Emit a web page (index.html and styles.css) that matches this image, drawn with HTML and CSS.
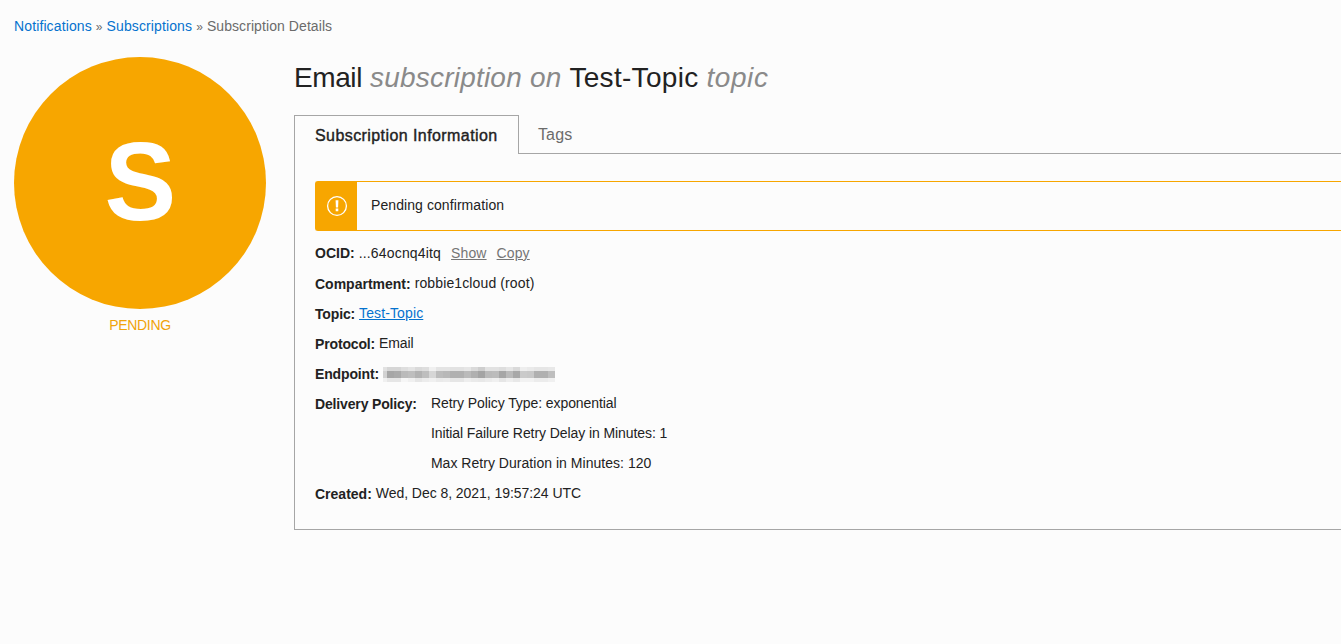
FILE: index.html
```html
<!DOCTYPE html>
<html lang="en">
<head>
<meta charset="utf-8">
<title>Subscription Details</title>
<link rel="stylesheet" href="styles.css">
</head>
<body>
<nav class="breadcrumb"><a href="#">Notifications</a> <span class="sep">»</span> <a href="#">Subscriptions</a> <span class="sep">»</span> <span class="current">Subscription Details</span></nav>
<div class="layout">
  <aside class="status">
    <div class="status-circle"><span class="status-letter">S</span></div>
    <div class="status-label">PENDING</div>
  </aside>
  <main class="content">
    <h1 class="title"><span class="t-type">Email</span> <em class="t-sub">subscription on</em> <span class="t-topic">Test-Topic</span> <em class="t-end">topic</em></h1>
    <div class="tabs">
      <div class="tab active"><span class="active-text">Subscription Information</span></div>
      <div class="tab rest">Tags</div>
    </div>
    <section class="panel">
      <div class="alert">
        <div class="alert-icon">
          <svg width="22" height="22" viewBox="0 0 22 22"><circle cx="11" cy="11" r="9.4" fill="none" stroke="#fff" stroke-width="1.3"/><path d="M9.6 5.2h2.8l-.3 7.2H9.9zM9.7 13.6h2.6v2.6H9.7z" fill="#fff"/></svg>
        </div>
        <div class="alert-text">Pending confirmation</div>
      </div>
      <div class="details">
        <div class="row ocid"><b>OCID:</b><span class="value">...64ocnq4itq</span><a class="action" href="#">Show</a><a class="action" href="#">Copy</a></div>
        <div class="row"><b>Compartment:</b><span class="value">robbie1cloud (root)</span></div>
        <div class="row tight"><b>Topic:</b><a class="value link" href="#">Test-Topic</a></div>
        <div class="row tight"><b>Protocol:</b><span class="value email">Email</span></div>
        <div class="row tight"><b>Endpoint:</b><svg class="redacted" width="176" height="15" viewBox="0 0 176 15" shape-rendering="crispEdges"><g id="mosaic"></g></svg></div>
        <div class="row policy tight"><b>Delivery Policy:</b>
          <div class="policy-list"><div>Retry Policy Type: exponential</div><div class="delay">Initial Failure Retry Delay in Minutes: 1</div><div class="duration">Max Retry Duration in Minutes: 120</div></div>
        </div>
        <div class="row"><b>Created:</b><span class="value date">Wed, Dec 8, 2021, 19:57:24 UTC</span></div>
      </div>
    </section>
  </main>
</div>
<script src="mosaic.js"></script>
</body>
</html>
```
FILE: styles.css
```css
* { box-sizing: border-box; }
body { margin: 0; height: 644px; overflow: hidden; background: #fcfcfc; color: #222; font: 14px/20px "Liberation Sans", Arial, sans-serif; letter-spacing: .12px; }
a { color: #0572ce; text-decoration: none; }
.breadcrumb { padding: 16px 14px 0; height: 57px; color: #6b6b6b; white-space: nowrap; }
.sep { font-size: 12px; letter-spacing: 0; }
.current { letter-spacing: .08px; }
.layout { display: flex; }
.status { width: 280px; flex: none; padding: 0 14px; text-align: center; }
.status-circle { width: 252px; height: 252px; padding-bottom: 3px; border-radius: 50%; background: #f7a600; display: flex; align-items: center; justify-content: center; }
.status-letter { color: #fff; font-size: 112px; line-height: 120px; font-weight: bold; letter-spacing: 0; transform: scaleX(.96); }
.status-label { margin-top: 6px; color: #f0a30a; letter-spacing: -.3px; }
.content { width: 1061px; flex: none; padding-left: 14px; }
.title { margin: 0; height: 58px; padding-top: 1px; font-size: 28px; line-height: 40px; font-weight: normal; letter-spacing: .1px; white-space: nowrap; }
.title em { color: #8a8a8a; }
.t-type { letter-spacing: -.4px; }
.t-sub { letter-spacing: .22px; }
.t-topic { letter-spacing: .3px; }
.title .t-end { letter-spacing: .6px; }
.tabs { display: flex; height: 39px; font-size: 16px; }
.tab { height: 39px; line-height: 39px; }
.active { width: 225px; padding-left: 20px; border: 1px solid #a6a6a6; border-bottom: 0; letter-spacing: .42px; -webkit-text-stroke: .4px #222; }
.rest { flex: 1; padding-left: 19px; color: #6b6b6b; border-bottom: 1px solid #a6a6a6; }
.panel { height: 376px; padding: 27px 0 0 20px; border-left: 1px solid #a6a6a6; border-bottom: 1px solid #a6a6a6; }
.alert { display: flex; height: 50px; border: 1px solid #f7a600; border-right: 0; border-radius: 3px 0 0 3px; }
.alert-icon { width: 41px; display: flex; align-items: center; justify-content: center; background: #f7a600; }
.alert-text { padding-left: 14px; line-height: 46px; letter-spacing: .08px; }
.details { padding-top: 7px; }
.row { display: flex; height: 30px; line-height: 30px; white-space: nowrap; }
.row b { padding-top: 1px; margin-right: 4px; letter-spacing: 0; }
.row.tight b { letter-spacing: -.15px; }
.row.ocid b { padding-top: 0; }
.ocid .value { letter-spacing: .17px; }
.email { letter-spacing: -.15px; }
.date { letter-spacing: -.05px; }
.link { text-decoration: underline; }
.action { margin-left: 10px; color: #757575; text-decoration: underline; }
.redacted { margin-top: 9px; }
.policy { height: 90px; }
.policy-list { padding-left: 10px; letter-spacing: -.08px; }
.duration { letter-spacing: .03px; }
```
FILE: mosaic.js
```javascript
// Grey levels for each row of pixelated endpoint blocks.
const rows = [
  { y: 0, h: 4, tones: [226, 214, 214, 222, 228, 218, 222, 240, 228, 228, 226, 226, 230, 218, 206, 226, 226, 222, 230, 218, 238, 234, 230, 230, 232] },
  { y: 4, h: 7, tones: [210, 166, 170, 186, 190, 178, 190, 214, 188, 184, 176, 176, 186, 176, 164, 186, 188, 166, 186, 168, 202, 200, 176, 176, 190] },
  { y: 11, h: 4, tones: [240, 230, 230, 246, 240, 230, 236, 240, 234, 236, 230, 230, 238, 234, 232, 236, 240, 230, 238, 232, 242, 242, 236, 236, 240] }
];
const mosaic = document.getElementById("mosaic");
rows.forEach(({ y, h, tones }) => tones.forEach((tone, i) => {
  const cell = document.createElementNS("http://www.w3.org/2000/svg", "rect");
  const x = i === 0 ? 0 : i * 7 - 3;
  const width = i === 0 ? 4 : Math.min(7, 173 - x);
  Object.entries({ x, y, width, height: h, fill: `rgb(${tone},${tone},${tone})` }).forEach(([k, v]) => cell.setAttribute(k, v));
  mosaic.append(cell);
}));
```
